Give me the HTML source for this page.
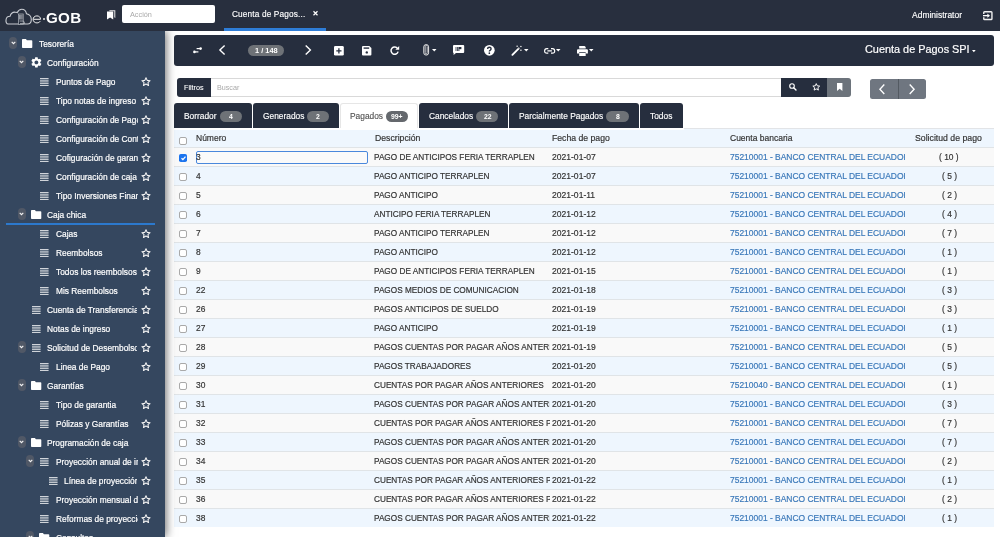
<!DOCTYPE html>
<html><head><meta charset="utf-8"><style>
*{box-sizing:border-box;margin:0;padding:0}
html,body{width:1000px;height:537px;overflow:hidden;background:#fff;-webkit-font-smoothing:antialiased;font-family:"Liberation Sans",sans-serif;color:#333}
.a{position:absolute}
.t{position:absolute;white-space:nowrap;will-change:transform}
svg{position:absolute;overflow:visible}
</style></head><body>
<div class="a" style="left:0;top:0;width:1000px;height:31px;z-index:5;background:#282f3e">
<svg style="left:0px;top:0px" width="50" height="30" viewBox="0 0 50 30"><path d="M8.1 24 C6.5 24 5.8 22 6 20 C6.2 17.5 8 16.2 10.1 16.2 C10.8 13.5 12.5 12 15 12.1 C16 12.1 16.8 12.3 17.3 12.6 C18.3 10.4 20 9.3 21.8 9.3 C24.2 9.3 26 11.2 26.5 13.8 C29.5 14.5 31.3 16.5 31.3 19.5 C31.3 22 29.8 24 27.5 24 Z" fill="none" stroke="#c9ccd2" stroke-width="1.1"/><rect x="18.4" y="14" width="4.8" height="10.6" fill="#282f3e" stroke="#b5b9bf" stroke-width="0.7"/><path d="M19.6 14.8 V19.5 M20.8 14.8 V19.5 M22 14.8 V19.5" stroke="#c0c3c8" stroke-width="0.8"/><path d="M19.5 21 H23.5 L24.8 23.5 H20" fill="none" stroke="#b5b9bf" stroke-width="0.8"/></svg>
<svg style="left:0px;top:0px" width="50" height="30" viewBox="0 0 50 30"><path d="M33.3 19.3 H40.5 C40.6 17.2 39 15.9 36.9 15.9 C34.6 15.9 33.1 17.5 33.1 19.4 C33.1 21.4 34.7 22.9 36.9 22.9 C38.3 22.9 39.5 22.3 40.2 21.3" fill="none" stroke="#f2f2f2" stroke-width="1"/></svg>
<div class="a" style="left:43.2px;top:18.3px;width:1.7px;height:1.7px;background:#e8e8e8;border-radius:1px"></div>
<div class="t" style="left:46.20px;top:4.52px;font-size:13.8px;line-height:28px;color:#fff;font-weight:bold;"><span style="display:inline-block;transform-origin:0 0;transform:scaleX(1.1);letter-spacing:0.25px">GOB</span></div>
<svg style="left:106.9px;top:9.5px" width="8.5" height="9.5" viewBox="0 0 8.5 9.5"><path d="M2.4 0.3 H8.3 V8 L7.3 7.2 V1.3 H2.4 Z" fill="#e8e8e8"/><path d="M0 1.6 H6.2 V9.4 L3.1 7.6 L0 9.4 Z" fill="#fff"/></svg>
<div class="a" style="left:122.1px;top:4.7px;width:92.9px;height:18.3px;background:#fff;border-radius:2px"></div>
<div class="t" style="left:129.80px;top:6.87px;font-size:7.6px;line-height:15px;color:#a9a9a9;font-weight:normal;"><span style="display:inline-block;transform-origin:0 0;transform:scaleX(0.96);letter-spacing:0px">Acción</span></div>
<div class="t" style="left:232.30px;top:4.95px;font-size:8.8px;line-height:18px;color:#fff;font-weight:normal;-webkit-text-stroke:0.15px #fff;"><span style="display:inline-block;transform-origin:0 0;transform:scaleX(0.94);letter-spacing:0.15px">Cuenta de Pagos...</span></div>
<svg style="left:313px;top:11px" width="5" height="4.5" viewBox="0 0 5 4.5"><path d="M0.5 0.3 L4.5 4.2 M4.5 0.3 L0.5 4.2" stroke="#fff" stroke-width="1.2"/></svg>
<div class="a" style="left:224px;top:28px;width:102px;height:3px;background:#2e7dd7;"></div>
<div class="t" style="left:912.40px;top:6.35px;font-size:8.8px;line-height:18px;color:#fff;font-weight:normal;-webkit-text-stroke:0.15px #fff;"><span style="display:inline-block;transform-origin:0 0;transform:scaleX(0.965);letter-spacing:0px">Administrator</span></div>
<svg style="left:983px;top:11.4px" width="9.7" height="9.3" viewBox="0 0 9.7 9.3"><path d="M0.75 3.1 V1.6 Q0.75 0.75 1.6 0.75 H8.1 Q8.95 0.75 8.95 1.6 V7.7 Q8.95 8.55 8.1 8.55 H1.6 Q0.75 8.55 0.75 7.7 V6.2" fill="none" stroke="#f0f0f0" stroke-width="1.4"/><path d="M0 4.65 H5" stroke="#fff" stroke-width="1.3"/><path d="M4.4 2.6 L7 4.65 L4.4 6.7 Z" fill="#fff"/></svg>
</div>
<div class="a" style="left:0;top:31px;width:165px;height:506px;background:#35475f;box-shadow:1px 0 9px rgba(0,0,0,.6);z-index:3;overflow:hidden">
<div class="a" style="left:9.2px;top:6.3px;width:8px;height:12px;border-radius:4px;background:#505866"><svg style="left:1.5px;top:4.0px" width="5" height="4" viewBox="0 0 5 4"><path d="M0.7 0.8 L2.5 2.6 L4.3 0.8" fill="none" stroke="#f4f4f4" stroke-width="1.15"/></svg></div>
<svg style="left:22.0px;top:7.6px" width="10.3" height="9" viewBox="0 0 10.3 9"><path d="M0 0.8 Q0 0 0.8 0 H3.9 L4.9 1.2 H9.5 Q10.3 1.2 10.3 2 V8.2 Q10.3 9 9.5 9 H0.8 Q0 9 0 8.2 Z" fill="#fff"/></svg>
<div class="t" style="left:38.70px;top:4.01px;font-size:9.2px;line-height:18px;color:#fff;font-weight:normal;width:98.50px;overflow:hidden;-webkit-text-stroke:0.2px #fff;"><span style="display:inline-block;transform-origin:0 0;transform:scaleX(0.91);letter-spacing:0px">Tesorería</span></div>
<div class="a" style="left:17.7px;top:25.3px;width:8px;height:12px;border-radius:4px;background:#505866"><svg style="left:1.5px;top:4.0px" width="5" height="4" viewBox="0 0 5 4"><path d="M0.7 0.8 L2.5 2.6 L4.3 0.8" fill="none" stroke="#f4f4f4" stroke-width="1.15"/></svg></div>
<svg style="left:29.9px;top:24.7px" width="12.8" height="12.8" viewBox="0 0 24 24"><path fill="#fff" d="M19.14 12.94c.04-.3.06-.61.06-.94 0-.32-.02-.64-.07-.94l2.03-1.58a.49.49 0 0 0 .12-.61l-1.920-3.320a.488.488 0 0 0-.59-.22l-2.39.96c-.5-.38-1.030-.7-1.620-.94l-.36-2.54a.484.484 0 0 0-.48-.41h-3.84c-.24 0-.43.17-.47.41l-.36 2.54c-.59.24-1.130.57-1.620.94l-2.390-.96c-.22-.08-.47 0-.59.22L2.74 8.87c-.12.21-.08.47.12.61l2.03 1.58c-.05.3-.09.63-.09.94s.02.64.07.94l-2.03 1.58a.49.49 0 0 0-.12.61l1.92 3.32c.12.22.37.29.59.22l2.39-.96c.5.38 1.03.7 1.62.94l.36 2.54c.05.24.24.41.48.41h3.84c.24 0 .44-.17.47-.41l.36-2.54c.59-.24 1.13-.56 1.62-.94l2.39.96c.22.08.47 0 .59-.22l1.92-3.32c.12-.22.07-.47-.12-.61l-2.01-1.58zM12 15.6c-1.98 0-3.6-1.62-3.6-3.6s1.62-3.6 3.6-3.6 3.6 1.62 3.6 3.6-1.62 3.6-3.6 3.6z"/></svg>
<div class="t" style="left:47.20px;top:23.01px;font-size:9.2px;line-height:18px;color:#fff;font-weight:normal;width:90.00px;overflow:hidden;-webkit-text-stroke:0.2px #fff;"><span style="display:inline-block;transform-origin:0 0;transform:scaleX(0.91);letter-spacing:0px">Configuración</span></div>
<svg style="left:40.0px;top:46.9px" width="8.6" height="7.8" viewBox="0 0 8.6 7.8"><g fill="#eceef0"><rect y="0" width="8.6" height="0.85"/><rect y="1.75" width="8.6" height="0.85"/><rect y="3.5" width="8.6" height="0.85"/><rect y="5.25" width="8.6" height="0.85"/><rect y="7" width="8.6" height="0.85"/></g></svg>
<div class="t" style="left:55.70px;top:42.01px;font-size:9.2px;line-height:18px;color:#fff;font-weight:normal;width:81.50px;overflow:hidden;-webkit-text-stroke:0.2px #fff;"><span style="display:inline-block;transform-origin:0 0;transform:scaleX(0.91);letter-spacing:0px">Puntos de Pago</span></div>
<svg style="left:141px;top:45.7px" width="10" height="9.6" viewBox="0 0 24 23"><path d="M12 1.8 L14.9 8.1 L21.8 8.9 L16.7 13.6 L18.1 20.4 L12 17 L5.9 20.4 L7.3 13.6 L2.2 8.9 L9.1 8.1 Z" fill="none" stroke="#f2f2f2" stroke-width="2.6" stroke-linejoin="round"/></svg>
<svg style="left:40.0px;top:65.9px" width="8.6" height="7.8" viewBox="0 0 8.6 7.8"><g fill="#eceef0"><rect y="0" width="8.6" height="0.85"/><rect y="1.75" width="8.6" height="0.85"/><rect y="3.5" width="8.6" height="0.85"/><rect y="5.25" width="8.6" height="0.85"/><rect y="7" width="8.6" height="0.85"/></g></svg>
<div class="t" style="left:55.70px;top:61.01px;font-size:9.2px;line-height:18px;color:#fff;font-weight:normal;width:81.50px;overflow:hidden;-webkit-text-stroke:0.2px #fff;"><span style="display:inline-block;transform-origin:0 0;transform:scaleX(0.91);letter-spacing:0px">Tipo notas de ingreso</span></div>
<svg style="left:141px;top:64.7px" width="10" height="9.6" viewBox="0 0 24 23"><path d="M12 1.8 L14.9 8.1 L21.8 8.9 L16.7 13.6 L18.1 20.4 L12 17 L5.9 20.4 L7.3 13.6 L2.2 8.9 L9.1 8.1 Z" fill="none" stroke="#f2f2f2" stroke-width="2.6" stroke-linejoin="round"/></svg>
<svg style="left:40.0px;top:84.9px" width="8.6" height="7.8" viewBox="0 0 8.6 7.8"><g fill="#eceef0"><rect y="0" width="8.6" height="0.85"/><rect y="1.75" width="8.6" height="0.85"/><rect y="3.5" width="8.6" height="0.85"/><rect y="5.25" width="8.6" height="0.85"/><rect y="7" width="8.6" height="0.85"/></g></svg>
<div class="t" style="left:55.70px;top:80.01px;font-size:9.2px;line-height:18px;color:#fff;font-weight:normal;width:81.50px;overflow:hidden;-webkit-text-stroke:0.2px #fff;"><span style="display:inline-block;transform-origin:0 0;transform:scaleX(0.91);letter-spacing:0px">Configuración de Pagos</span></div>
<svg style="left:141px;top:83.7px" width="10" height="9.6" viewBox="0 0 24 23"><path d="M12 1.8 L14.9 8.1 L21.8 8.9 L16.7 13.6 L18.1 20.4 L12 17 L5.9 20.4 L7.3 13.6 L2.2 8.9 L9.1 8.1 Z" fill="none" stroke="#f2f2f2" stroke-width="2.6" stroke-linejoin="round"/></svg>
<svg style="left:40.0px;top:103.9px" width="8.6" height="7.8" viewBox="0 0 8.6 7.8"><g fill="#eceef0"><rect y="0" width="8.6" height="0.85"/><rect y="1.75" width="8.6" height="0.85"/><rect y="3.5" width="8.6" height="0.85"/><rect y="5.25" width="8.6" height="0.85"/><rect y="7" width="8.6" height="0.85"/></g></svg>
<div class="t" style="left:55.70px;top:99.01px;font-size:9.2px;line-height:18px;color:#fff;font-weight:normal;width:81.50px;overflow:hidden;-webkit-text-stroke:0.2px #fff;"><span style="display:inline-block;transform-origin:0 0;transform:scaleX(0.91);letter-spacing:0px">Configuración de Contabilidad</span></div>
<svg style="left:141px;top:102.7px" width="10" height="9.6" viewBox="0 0 24 23"><path d="M12 1.8 L14.9 8.1 L21.8 8.9 L16.7 13.6 L18.1 20.4 L12 17 L5.9 20.4 L7.3 13.6 L2.2 8.9 L9.1 8.1 Z" fill="none" stroke="#f2f2f2" stroke-width="2.6" stroke-linejoin="round"/></svg>
<svg style="left:40.0px;top:122.9px" width="8.6" height="7.8" viewBox="0 0 8.6 7.8"><g fill="#eceef0"><rect y="0" width="8.6" height="0.85"/><rect y="1.75" width="8.6" height="0.85"/><rect y="3.5" width="8.6" height="0.85"/><rect y="5.25" width="8.6" height="0.85"/><rect y="7" width="8.6" height="0.85"/></g></svg>
<div class="t" style="left:55.70px;top:118.01px;font-size:9.2px;line-height:18px;color:#fff;font-weight:normal;width:81.50px;overflow:hidden;-webkit-text-stroke:0.2px #fff;"><span style="display:inline-block;transform-origin:0 0;transform:scaleX(0.91);letter-spacing:0px">Cofiguración de garantias</span></div>
<svg style="left:141px;top:121.7px" width="10" height="9.6" viewBox="0 0 24 23"><path d="M12 1.8 L14.9 8.1 L21.8 8.9 L16.7 13.6 L18.1 20.4 L12 17 L5.9 20.4 L7.3 13.6 L2.2 8.9 L9.1 8.1 Z" fill="none" stroke="#f2f2f2" stroke-width="2.6" stroke-linejoin="round"/></svg>
<svg style="left:40.0px;top:141.9px" width="8.6" height="7.8" viewBox="0 0 8.6 7.8"><g fill="#eceef0"><rect y="0" width="8.6" height="0.85"/><rect y="1.75" width="8.6" height="0.85"/><rect y="3.5" width="8.6" height="0.85"/><rect y="5.25" width="8.6" height="0.85"/><rect y="7" width="8.6" height="0.85"/></g></svg>
<div class="t" style="left:55.70px;top:137.01px;font-size:9.2px;line-height:18px;color:#fff;font-weight:normal;width:81.50px;overflow:hidden;-webkit-text-stroke:0.2px #fff;"><span style="display:inline-block;transform-origin:0 0;transform:scaleX(0.91);letter-spacing:0px">Configuración de caja chica</span></div>
<svg style="left:141px;top:140.7px" width="10" height="9.6" viewBox="0 0 24 23"><path d="M12 1.8 L14.9 8.1 L21.8 8.9 L16.7 13.6 L18.1 20.4 L12 17 L5.9 20.4 L7.3 13.6 L2.2 8.9 L9.1 8.1 Z" fill="none" stroke="#f2f2f2" stroke-width="2.6" stroke-linejoin="round"/></svg>
<svg style="left:40.0px;top:160.9px" width="8.6" height="7.8" viewBox="0 0 8.6 7.8"><g fill="#eceef0"><rect y="0" width="8.6" height="0.85"/><rect y="1.75" width="8.6" height="0.85"/><rect y="3.5" width="8.6" height="0.85"/><rect y="5.25" width="8.6" height="0.85"/><rect y="7" width="8.6" height="0.85"/></g></svg>
<div class="t" style="left:55.70px;top:156.01px;font-size:9.2px;line-height:18px;color:#fff;font-weight:normal;width:81.50px;overflow:hidden;-webkit-text-stroke:0.2px #fff;"><span style="display:inline-block;transform-origin:0 0;transform:scaleX(0.91);letter-spacing:0px">Tipo Inversiones Financieras</span></div>
<svg style="left:141px;top:159.7px" width="10" height="9.6" viewBox="0 0 24 23"><path d="M12 1.8 L14.9 8.1 L21.8 8.9 L16.7 13.6 L18.1 20.4 L12 17 L5.9 20.4 L7.3 13.6 L2.2 8.9 L9.1 8.1 Z" fill="none" stroke="#f2f2f2" stroke-width="2.6" stroke-linejoin="round"/></svg>
<div class="a" style="left:17.7px;top:177.3px;width:8px;height:12px;border-radius:4px;background:#505866"><svg style="left:1.5px;top:4.0px" width="5" height="4" viewBox="0 0 5 4"><path d="M0.7 0.8 L2.5 2.6 L4.3 0.8" fill="none" stroke="#f4f4f4" stroke-width="1.15"/></svg></div>
<svg style="left:30.5px;top:178.6px" width="10.3" height="9" viewBox="0 0 10.3 9"><path d="M0 0.8 Q0 0 0.8 0 H3.9 L4.9 1.2 H9.5 Q10.3 1.2 10.3 2 V8.2 Q10.3 9 9.5 9 H0.8 Q0 9 0 8.2 Z" fill="#fff"/></svg>
<div class="t" style="left:47.20px;top:175.01px;font-size:9.2px;line-height:18px;color:#fff;font-weight:normal;width:90.00px;overflow:hidden;-webkit-text-stroke:0.2px #fff;"><span style="display:inline-block;transform-origin:0 0;transform:scaleX(0.91);letter-spacing:0px">Caja chica</span></div>
<svg style="left:40.0px;top:198.9px" width="8.6" height="7.8" viewBox="0 0 8.6 7.8"><g fill="#eceef0"><rect y="0" width="8.6" height="0.85"/><rect y="1.75" width="8.6" height="0.85"/><rect y="3.5" width="8.6" height="0.85"/><rect y="5.25" width="8.6" height="0.85"/><rect y="7" width="8.6" height="0.85"/></g></svg>
<div class="t" style="left:55.70px;top:194.01px;font-size:9.2px;line-height:18px;color:#fff;font-weight:normal;width:81.50px;overflow:hidden;-webkit-text-stroke:0.2px #fff;"><span style="display:inline-block;transform-origin:0 0;transform:scaleX(0.91);letter-spacing:0px">Cajas</span></div>
<svg style="left:141px;top:197.7px" width="10" height="9.6" viewBox="0 0 24 23"><path d="M12 1.8 L14.9 8.1 L21.8 8.9 L16.7 13.6 L18.1 20.4 L12 17 L5.9 20.4 L7.3 13.6 L2.2 8.9 L9.1 8.1 Z" fill="none" stroke="#f2f2f2" stroke-width="2.6" stroke-linejoin="round"/></svg>
<svg style="left:40.0px;top:217.9px" width="8.6" height="7.8" viewBox="0 0 8.6 7.8"><g fill="#eceef0"><rect y="0" width="8.6" height="0.85"/><rect y="1.75" width="8.6" height="0.85"/><rect y="3.5" width="8.6" height="0.85"/><rect y="5.25" width="8.6" height="0.85"/><rect y="7" width="8.6" height="0.85"/></g></svg>
<div class="t" style="left:55.70px;top:213.01px;font-size:9.2px;line-height:18px;color:#fff;font-weight:normal;width:81.50px;overflow:hidden;-webkit-text-stroke:0.2px #fff;"><span style="display:inline-block;transform-origin:0 0;transform:scaleX(0.91);letter-spacing:0px">Reembolsos</span></div>
<svg style="left:141px;top:216.7px" width="10" height="9.6" viewBox="0 0 24 23"><path d="M12 1.8 L14.9 8.1 L21.8 8.9 L16.7 13.6 L18.1 20.4 L12 17 L5.9 20.4 L7.3 13.6 L2.2 8.9 L9.1 8.1 Z" fill="none" stroke="#f2f2f2" stroke-width="2.6" stroke-linejoin="round"/></svg>
<svg style="left:40.0px;top:236.9px" width="8.6" height="7.8" viewBox="0 0 8.6 7.8"><g fill="#eceef0"><rect y="0" width="8.6" height="0.85"/><rect y="1.75" width="8.6" height="0.85"/><rect y="3.5" width="8.6" height="0.85"/><rect y="5.25" width="8.6" height="0.85"/><rect y="7" width="8.6" height="0.85"/></g></svg>
<div class="t" style="left:55.70px;top:232.01px;font-size:9.2px;line-height:18px;color:#fff;font-weight:normal;width:81.50px;overflow:hidden;-webkit-text-stroke:0.2px #fff;"><span style="display:inline-block;transform-origin:0 0;transform:scaleX(0.91);letter-spacing:0px">Todos los reembolsos</span></div>
<svg style="left:141px;top:235.7px" width="10" height="9.6" viewBox="0 0 24 23"><path d="M12 1.8 L14.9 8.1 L21.8 8.9 L16.7 13.6 L18.1 20.4 L12 17 L5.9 20.4 L7.3 13.6 L2.2 8.9 L9.1 8.1 Z" fill="none" stroke="#f2f2f2" stroke-width="2.6" stroke-linejoin="round"/></svg>
<svg style="left:40.0px;top:255.9px" width="8.6" height="7.8" viewBox="0 0 8.6 7.8"><g fill="#eceef0"><rect y="0" width="8.6" height="0.85"/><rect y="1.75" width="8.6" height="0.85"/><rect y="3.5" width="8.6" height="0.85"/><rect y="5.25" width="8.6" height="0.85"/><rect y="7" width="8.6" height="0.85"/></g></svg>
<div class="t" style="left:55.70px;top:251.01px;font-size:9.2px;line-height:18px;color:#fff;font-weight:normal;width:81.50px;overflow:hidden;-webkit-text-stroke:0.2px #fff;"><span style="display:inline-block;transform-origin:0 0;transform:scaleX(0.91);letter-spacing:0px">Mis Reembolsos</span></div>
<svg style="left:141px;top:254.7px" width="10" height="9.6" viewBox="0 0 24 23"><path d="M12 1.8 L14.9 8.1 L21.8 8.9 L16.7 13.6 L18.1 20.4 L12 17 L5.9 20.4 L7.3 13.6 L2.2 8.9 L9.1 8.1 Z" fill="none" stroke="#f2f2f2" stroke-width="2.6" stroke-linejoin="round"/></svg>
<svg style="left:31.5px;top:274.9px" width="8.6" height="7.8" viewBox="0 0 8.6 7.8"><g fill="#eceef0"><rect y="0" width="8.6" height="0.85"/><rect y="1.75" width="8.6" height="0.85"/><rect y="3.5" width="8.6" height="0.85"/><rect y="5.25" width="8.6" height="0.85"/><rect y="7" width="8.6" height="0.85"/></g></svg>
<div class="t" style="left:47.20px;top:270.01px;font-size:9.2px;line-height:18px;color:#fff;font-weight:normal;width:90.00px;overflow:hidden;-webkit-text-stroke:0.2px #fff;"><span style="display:inline-block;transform-origin:0 0;transform:scaleX(0.91);letter-spacing:0px">Cuenta de Transferencias</span></div>
<svg style="left:141px;top:273.7px" width="10" height="9.6" viewBox="0 0 24 23"><path d="M12 1.8 L14.9 8.1 L21.8 8.9 L16.7 13.6 L18.1 20.4 L12 17 L5.9 20.4 L7.3 13.6 L2.2 8.9 L9.1 8.1 Z" fill="none" stroke="#f2f2f2" stroke-width="2.6" stroke-linejoin="round"/></svg>
<svg style="left:31.5px;top:293.9px" width="8.6" height="7.8" viewBox="0 0 8.6 7.8"><g fill="#eceef0"><rect y="0" width="8.6" height="0.85"/><rect y="1.75" width="8.6" height="0.85"/><rect y="3.5" width="8.6" height="0.85"/><rect y="5.25" width="8.6" height="0.85"/><rect y="7" width="8.6" height="0.85"/></g></svg>
<div class="t" style="left:47.20px;top:289.01px;font-size:9.2px;line-height:18px;color:#fff;font-weight:normal;width:90.00px;overflow:hidden;-webkit-text-stroke:0.2px #fff;"><span style="display:inline-block;transform-origin:0 0;transform:scaleX(0.91);letter-spacing:0px">Notas de ingreso</span></div>
<svg style="left:141px;top:292.7px" width="10" height="9.6" viewBox="0 0 24 23"><path d="M12 1.8 L14.9 8.1 L21.8 8.9 L16.7 13.6 L18.1 20.4 L12 17 L5.9 20.4 L7.3 13.6 L2.2 8.9 L9.1 8.1 Z" fill="none" stroke="#f2f2f2" stroke-width="2.6" stroke-linejoin="round"/></svg>
<div class="a" style="left:17.7px;top:310.3px;width:8px;height:12px;border-radius:4px;background:#505866"><svg style="left:1.5px;top:4.0px" width="5" height="4" viewBox="0 0 5 4"><path d="M0.7 0.8 L2.5 2.6 L4.3 0.8" fill="none" stroke="#f4f4f4" stroke-width="1.15"/></svg></div>
<svg style="left:31.5px;top:312.9px" width="8.6" height="7.8" viewBox="0 0 8.6 7.8"><g fill="#eceef0"><rect y="0" width="8.6" height="0.85"/><rect y="1.75" width="8.6" height="0.85"/><rect y="3.5" width="8.6" height="0.85"/><rect y="5.25" width="8.6" height="0.85"/><rect y="7" width="8.6" height="0.85"/></g></svg>
<div class="t" style="left:47.20px;top:308.01px;font-size:9.2px;line-height:18px;color:#fff;font-weight:normal;width:90.00px;overflow:hidden;-webkit-text-stroke:0.2px #fff;"><span style="display:inline-block;transform-origin:0 0;transform:scaleX(0.91);letter-spacing:0px">Solicitud de Desembolso</span></div>
<svg style="left:141px;top:311.7px" width="10" height="9.6" viewBox="0 0 24 23"><path d="M12 1.8 L14.9 8.1 L21.8 8.9 L16.7 13.6 L18.1 20.4 L12 17 L5.9 20.4 L7.3 13.6 L2.2 8.9 L9.1 8.1 Z" fill="none" stroke="#f2f2f2" stroke-width="2.6" stroke-linejoin="round"/></svg>
<svg style="left:40.0px;top:331.9px" width="8.6" height="7.8" viewBox="0 0 8.6 7.8"><g fill="#eceef0"><rect y="0" width="8.6" height="0.85"/><rect y="1.75" width="8.6" height="0.85"/><rect y="3.5" width="8.6" height="0.85"/><rect y="5.25" width="8.6" height="0.85"/><rect y="7" width="8.6" height="0.85"/></g></svg>
<div class="t" style="left:55.70px;top:327.01px;font-size:9.2px;line-height:18px;color:#fff;font-weight:normal;width:81.50px;overflow:hidden;-webkit-text-stroke:0.2px #fff;"><span style="display:inline-block;transform-origin:0 0;transform:scaleX(0.91);letter-spacing:0px">Linea de Pago</span></div>
<svg style="left:141px;top:330.7px" width="10" height="9.6" viewBox="0 0 24 23"><path d="M12 1.8 L14.9 8.1 L21.8 8.9 L16.7 13.6 L18.1 20.4 L12 17 L5.9 20.4 L7.3 13.6 L2.2 8.9 L9.1 8.1 Z" fill="none" stroke="#f2f2f2" stroke-width="2.6" stroke-linejoin="round"/></svg>
<div class="a" style="left:17.7px;top:348.3px;width:8px;height:12px;border-radius:4px;background:#505866"><svg style="left:1.5px;top:4.0px" width="5" height="4" viewBox="0 0 5 4"><path d="M0.7 0.8 L2.5 2.6 L4.3 0.8" fill="none" stroke="#f4f4f4" stroke-width="1.15"/></svg></div>
<svg style="left:30.5px;top:349.6px" width="10.3" height="9" viewBox="0 0 10.3 9"><path d="M0 0.8 Q0 0 0.8 0 H3.9 L4.9 1.2 H9.5 Q10.3 1.2 10.3 2 V8.2 Q10.3 9 9.5 9 H0.8 Q0 9 0 8.2 Z" fill="#fff"/></svg>
<div class="t" style="left:47.20px;top:346.01px;font-size:9.2px;line-height:18px;color:#fff;font-weight:normal;width:90.00px;overflow:hidden;-webkit-text-stroke:0.2px #fff;"><span style="display:inline-block;transform-origin:0 0;transform:scaleX(0.91);letter-spacing:0px">Garantías</span></div>
<svg style="left:40.0px;top:369.9px" width="8.6" height="7.8" viewBox="0 0 8.6 7.8"><g fill="#eceef0"><rect y="0" width="8.6" height="0.85"/><rect y="1.75" width="8.6" height="0.85"/><rect y="3.5" width="8.6" height="0.85"/><rect y="5.25" width="8.6" height="0.85"/><rect y="7" width="8.6" height="0.85"/></g></svg>
<div class="t" style="left:55.70px;top:365.01px;font-size:9.2px;line-height:18px;color:#fff;font-weight:normal;width:81.50px;overflow:hidden;-webkit-text-stroke:0.2px #fff;"><span style="display:inline-block;transform-origin:0 0;transform:scaleX(0.91);letter-spacing:0px">Tipo de garantia</span></div>
<svg style="left:141px;top:368.7px" width="10" height="9.6" viewBox="0 0 24 23"><path d="M12 1.8 L14.9 8.1 L21.8 8.9 L16.7 13.6 L18.1 20.4 L12 17 L5.9 20.4 L7.3 13.6 L2.2 8.9 L9.1 8.1 Z" fill="none" stroke="#f2f2f2" stroke-width="2.6" stroke-linejoin="round"/></svg>
<svg style="left:40.0px;top:388.9px" width="8.6" height="7.8" viewBox="0 0 8.6 7.8"><g fill="#eceef0"><rect y="0" width="8.6" height="0.85"/><rect y="1.75" width="8.6" height="0.85"/><rect y="3.5" width="8.6" height="0.85"/><rect y="5.25" width="8.6" height="0.85"/><rect y="7" width="8.6" height="0.85"/></g></svg>
<div class="t" style="left:55.70px;top:384.01px;font-size:9.2px;line-height:18px;color:#fff;font-weight:normal;width:81.50px;overflow:hidden;-webkit-text-stroke:0.2px #fff;"><span style="display:inline-block;transform-origin:0 0;transform:scaleX(0.91);letter-spacing:0px">Pólizas y Garantías</span></div>
<svg style="left:141px;top:387.7px" width="10" height="9.6" viewBox="0 0 24 23"><path d="M12 1.8 L14.9 8.1 L21.8 8.9 L16.7 13.6 L18.1 20.4 L12 17 L5.9 20.4 L7.3 13.6 L2.2 8.9 L9.1 8.1 Z" fill="none" stroke="#f2f2f2" stroke-width="2.6" stroke-linejoin="round"/></svg>
<div class="a" style="left:17.7px;top:405.3px;width:8px;height:12px;border-radius:4px;background:#505866"><svg style="left:1.5px;top:4.0px" width="5" height="4" viewBox="0 0 5 4"><path d="M0.7 0.8 L2.5 2.6 L4.3 0.8" fill="none" stroke="#f4f4f4" stroke-width="1.15"/></svg></div>
<svg style="left:30.5px;top:406.6px" width="10.3" height="9" viewBox="0 0 10.3 9"><path d="M0 0.8 Q0 0 0.8 0 H3.9 L4.9 1.2 H9.5 Q10.3 1.2 10.3 2 V8.2 Q10.3 9 9.5 9 H0.8 Q0 9 0 8.2 Z" fill="#fff"/></svg>
<div class="t" style="left:47.20px;top:403.01px;font-size:9.2px;line-height:18px;color:#fff;font-weight:normal;width:90.00px;overflow:hidden;-webkit-text-stroke:0.2px #fff;"><span style="display:inline-block;transform-origin:0 0;transform:scaleX(0.91);letter-spacing:0px">Programación de caja</span></div>
<div class="a" style="left:26.2px;top:424.3px;width:8px;height:12px;border-radius:4px;background:#505866"><svg style="left:1.5px;top:4.0px" width="5" height="4" viewBox="0 0 5 4"><path d="M0.7 0.8 L2.5 2.6 L4.3 0.8" fill="none" stroke="#f4f4f4" stroke-width="1.15"/></svg></div>
<svg style="left:40.0px;top:426.9px" width="8.6" height="7.8" viewBox="0 0 8.6 7.8"><g fill="#eceef0"><rect y="0" width="8.6" height="0.85"/><rect y="1.75" width="8.6" height="0.85"/><rect y="3.5" width="8.6" height="0.85"/><rect y="5.25" width="8.6" height="0.85"/><rect y="7" width="8.6" height="0.85"/></g></svg>
<div class="t" style="left:55.70px;top:422.01px;font-size:9.2px;line-height:18px;color:#fff;font-weight:normal;width:81.50px;overflow:hidden;-webkit-text-stroke:0.2px #fff;"><span style="display:inline-block;transform-origin:0 0;transform:scaleX(0.91);letter-spacing:0px">Proyección anual de ingresos</span></div>
<svg style="left:141px;top:425.7px" width="10" height="9.6" viewBox="0 0 24 23"><path d="M12 1.8 L14.9 8.1 L21.8 8.9 L16.7 13.6 L18.1 20.4 L12 17 L5.9 20.4 L7.3 13.6 L2.2 8.9 L9.1 8.1 Z" fill="none" stroke="#f2f2f2" stroke-width="2.6" stroke-linejoin="round"/></svg>
<svg style="left:48.5px;top:445.9px" width="8.6" height="7.8" viewBox="0 0 8.6 7.8"><g fill="#eceef0"><rect y="0" width="8.6" height="0.85"/><rect y="1.75" width="8.6" height="0.85"/><rect y="3.5" width="8.6" height="0.85"/><rect y="5.25" width="8.6" height="0.85"/><rect y="7" width="8.6" height="0.85"/></g></svg>
<div class="t" style="left:64.20px;top:441.01px;font-size:9.2px;line-height:18px;color:#fff;font-weight:normal;width:73.00px;overflow:hidden;-webkit-text-stroke:0.2px #fff;"><span style="display:inline-block;transform-origin:0 0;transform:scaleX(0.91);letter-spacing:0px">Línea de proyección</span></div>
<svg style="left:141px;top:444.7px" width="10" height="9.6" viewBox="0 0 24 23"><path d="M12 1.8 L14.9 8.1 L21.8 8.9 L16.7 13.6 L18.1 20.4 L12 17 L5.9 20.4 L7.3 13.6 L2.2 8.9 L9.1 8.1 Z" fill="none" stroke="#f2f2f2" stroke-width="2.6" stroke-linejoin="round"/></svg>
<svg style="left:40.0px;top:464.9px" width="8.6" height="7.8" viewBox="0 0 8.6 7.8"><g fill="#eceef0"><rect y="0" width="8.6" height="0.85"/><rect y="1.75" width="8.6" height="0.85"/><rect y="3.5" width="8.6" height="0.85"/><rect y="5.25" width="8.6" height="0.85"/><rect y="7" width="8.6" height="0.85"/></g></svg>
<div class="t" style="left:55.70px;top:460.01px;font-size:9.2px;line-height:18px;color:#fff;font-weight:normal;width:81.50px;overflow:hidden;-webkit-text-stroke:0.2px #fff;"><span style="display:inline-block;transform-origin:0 0;transform:scaleX(0.91);letter-spacing:0px">Proyección mensual de caja</span></div>
<svg style="left:141px;top:463.7px" width="10" height="9.6" viewBox="0 0 24 23"><path d="M12 1.8 L14.9 8.1 L21.8 8.9 L16.7 13.6 L18.1 20.4 L12 17 L5.9 20.4 L7.3 13.6 L2.2 8.9 L9.1 8.1 Z" fill="none" stroke="#f2f2f2" stroke-width="2.6" stroke-linejoin="round"/></svg>
<svg style="left:40.0px;top:483.9px" width="8.6" height="7.8" viewBox="0 0 8.6 7.8"><g fill="#eceef0"><rect y="0" width="8.6" height="0.85"/><rect y="1.75" width="8.6" height="0.85"/><rect y="3.5" width="8.6" height="0.85"/><rect y="5.25" width="8.6" height="0.85"/><rect y="7" width="8.6" height="0.85"/></g></svg>
<div class="t" style="left:55.70px;top:479.01px;font-size:9.2px;line-height:18px;color:#fff;font-weight:normal;width:81.50px;overflow:hidden;-webkit-text-stroke:0.2px #fff;"><span style="display:inline-block;transform-origin:0 0;transform:scaleX(0.91);letter-spacing:0px">Reformas de proyección</span></div>
<svg style="left:141px;top:482.7px" width="10" height="9.6" viewBox="0 0 24 23"><path d="M12 1.8 L14.9 8.1 L21.8 8.9 L16.7 13.6 L18.1 20.4 L12 17 L5.9 20.4 L7.3 13.6 L2.2 8.9 L9.1 8.1 Z" fill="none" stroke="#f2f2f2" stroke-width="2.6" stroke-linejoin="round"/></svg>
<div class="a" style="left:26.2px;top:500.3px;width:8px;height:12px;border-radius:4px;background:#505866"><svg style="left:1.5px;top:4.0px" width="5" height="4" viewBox="0 0 5 4"><path d="M0.7 0.8 L2.5 2.6 L4.3 0.8" fill="none" stroke="#f4f4f4" stroke-width="1.15"/></svg></div>
<svg style="left:39.0px;top:501.6px" width="10.3" height="9" viewBox="0 0 10.3 9"><path d="M0 0.8 Q0 0 0.8 0 H3.9 L4.9 1.2 H9.5 Q10.3 1.2 10.3 2 V8.2 Q10.3 9 9.5 9 H0.8 Q0 9 0 8.2 Z" fill="#fff"/></svg>
<div class="t" style="left:55.70px;top:498.01px;font-size:9.2px;line-height:18px;color:#fff;font-weight:normal;width:81.50px;overflow:hidden;-webkit-text-stroke:0.2px #fff;"><span style="display:inline-block;transform-origin:0 0;transform:scaleX(0.91);letter-spacing:0px">Consultas</span></div>
<div class="a" style="left:6px;top:192.3px;width:149px;height:1.6px;background:#2c79cd;"></div>
</div>
<div class="a" style="left:174.2px;top:34.9px;width:819.8px;height:31.1px;background:#262e3e;border-radius:3px"></div>
<svg style="left:192.5px;top:47px" width="9" height="6.5" viewBox="0 0 9 6.5"><path d="M3.6 1.6 H7.6" stroke="#fff" stroke-width="1.2"/><circle cx="7.6" cy="1.6" r="1.3" fill="#fff"/><path d="M5.4 4.9 H1.4" stroke="#fff" stroke-width="1.2"/><circle cx="1.4" cy="4.9" r="1.3" fill="#fff"/></svg>
<svg style="left:219px;top:45.3px" width="6.3" height="10" viewBox="0 0 6.3 10"><path d="M5.6 0.5 L0.9 5 L5.6 9.5" fill="none" stroke="#fff" stroke-width="1.4"/></svg>
<div class="a" style="left:247.8px;top:44.8px;width:36.6px;height:11.2px;background:#6e7277;border-radius:5.6px"></div>
<div class="t" style="left:254.50px;top:43.14px;font-size:7.4px;line-height:15px;color:#fff;font-weight:bold;">1 / 148</div>
<svg style="left:304.8px;top:45.3px" width="6.3" height="10" viewBox="0 0 6.3 10"><path d="M0.7 0.5 L5.4 5 L0.7 9.5" fill="none" stroke="#fff" stroke-width="1.4"/></svg>
<svg style="left:334.2px;top:45.6px" width="9.8" height="9.6" viewBox="0 0 9.8 9.6"><rect width="9.8" height="9.6" rx="1.3" fill="#fff"/><path d="M4.9 2.2 V7.4 M2.3 4.8 H7.5" stroke="#262e3e" stroke-width="1.3"/></svg>
<svg style="left:361.8px;top:45.6px" width="9.4" height="9.4" viewBox="0 0 9.4 9.4"><path d="M0 1 Q0 0 1 0 H7.3 L9.4 2.1 V8.4 Q9.4 9.4 8.4 9.4 H1 Q0 9.4 0 8.4 Z" fill="#fff"/><rect x="1.6" y="1.4" width="5.6" height="1.4" fill="#262e3e"/><circle cx="4.8" cy="6.4" r="1.2" fill="#262e3e"/></svg>
<svg style="left:389.8px;top:46.2px" width="9.2" height="8.6" viewBox="0 0 9.2 8.6"><path d="M7.6 2.6 A3.6 3.6 0 1 0 8.1 5.6" fill="none" stroke="#fff" stroke-width="1.5"/><path d="M9.2 0 V3.8 H5.4 Z" fill="#fff"/></svg>
<svg style="left:422.6px;top:44.3px" width="6.4" height="11.7" viewBox="0 0 6.4 11.7"><path d="M4.2 3 V8.6 Q4.2 9.9 3.2 9.9 Q2.2 9.9 2.2 8.6 V2.6 Q2.2 1.5 3.2 1.5 Q4.3 1.5 4.3 2.6" fill="none" stroke="#e0e0e0" stroke-width="0.8"/><path d="M5.6 2.8 V8.9 Q5.6 11.1 3.2 11.1 Q0.8 11.1 0.8 8.9 V2.8 Q0.8 0.6 3.2 0.6 Q5.6 0.6 5.6 2.8 Z" fill="none" stroke="#e8e8e8" stroke-width="1"/></svg>
<svg style="left:431.8px;top:49px" width="4.5" height="3" viewBox="0 0 4.5 3"><path d="M0 0 H4.5 L2.25 2.6 Z" fill="#fff"/></svg>
<svg style="left:452.8px;top:45.2px" width="11.2" height="9.9" viewBox="0 0 11.2 9.9"><path d="M0 1 Q0 0 1 0 H10.2 Q11.2 0 11.2 1 V7 Q11.2 8 10.2 8 H3 L0.6 9.9 V8 Q0 8 0 7 Z" fill="#fff"/><g fill="#262e3e"><rect x="2.6" y="2" width="0.8" height="4"/><rect x="4" y="2" width="0.8" height="4"/><rect x="5.4" y="2" width="3" height="2.2"/><rect x="5.4" y="4.2" width="1" height="1.8"/></g></svg>
<svg style="left:484.3px;top:44.8px" width="10.7" height="10.7" viewBox="0 0 10.7 10.7"><circle cx="5.35" cy="5.35" r="5.35" fill="#fff"/><path d="M3.6 4.1 Q3.6 2.3 5.35 2.3 Q7.1 2.3 7.1 3.8 Q7.1 4.8 6.1 5.3 Q5.35 5.7 5.35 6.6" fill="none" stroke="#262e3e" stroke-width="1.4"/><circle cx="5.35" cy="8.2" r="0.85" fill="#262e3e"/></svg>
<svg style="left:511.2px;top:45.1px" width="11.4" height="11" viewBox="0 0 11.4 11"><path d="M1.4 9.8 L7.6 3.6" stroke="#fff" stroke-width="1.9" stroke-linecap="round"/><g fill="#e6e6e6"><rect x="5.5" y="0.6" width="1.3" height="1.3"/><rect x="9.2" y="0.9" width="1.4" height="1.2"/><rect x="9.2" y="4.6" width="1.4" height="1.3"/></g><rect x="7.3" y="2.6" width="1.2" height="1.2" fill="#aaa"/></svg>
<svg style="left:523.6px;top:49.4px" width="4.5" height="3" viewBox="0 0 4.5 3"><path d="M0 0 H4.5 L2.25 2.6 Z" fill="#fff"/></svg>
<svg style="left:544px;top:47.5px" width="11.3" height="5.8" viewBox="0 0 11.3 5.8"><path d="M4.3 0.6 H2.9 Q0.6 0.6 0.6 2.9 Q0.6 5.2 2.9 5.2 H4.3 M7 0.6 H8.4 Q10.7 0.6 10.7 2.9 Q10.7 5.2 8.4 5.2 H7 M3.4 2.9 H7.9" fill="none" stroke="#fff" stroke-width="1.2"/></svg>
<svg style="left:556px;top:49.4px" width="4.5" height="3" viewBox="0 0 4.5 3"><path d="M0 0 H4.5 L2.25 2.6 Z" fill="#fff"/></svg>
<svg style="left:576.7px;top:45.6px" width="10.9" height="10" viewBox="0 0 10.9 10"><path d="M2.2 0 H7.6 L8.7 1.1 V2.6 H2.2 Z" fill="#fff"/><path d="M0 4.3 Q0 3.3 1 3.3 H9.9 Q10.9 3.3 10.9 4.3 V7.6 H8.7 V6.3 H2.2 V7.6 H0 Z" fill="#fff"/><rect x="2.2" y="7" width="6.5" height="3" fill="#fff"/></svg>
<svg style="left:588.5px;top:49.4px" width="4.5" height="3" viewBox="0 0 4.5 3"><path d="M0 0 H4.5 L2.25 2.6 Z" fill="#fff"/></svg>
<div class="t" style="left:864.80px;top:38.35px;font-size:11.4px;line-height:23px;color:#fff;font-weight:normal;-webkit-text-stroke:0.2px #fff;"><span style="display:inline-block;transform-origin:0 0;transform:scaleX(0.955);letter-spacing:0px">Cuenta de Pagos SPI</span></div>
<svg style="left:971.6px;top:49.8px" width="3.7" height="2.2" viewBox="0 0 3.7 2.2"><path d="M0 0 H3.7 L1.85 2.2 Z" fill="#fff"/></svg>
<div class="a" style="left:177.2px;top:78.1px;width:673.8px;height:18.5px;background:#fff;border:1px solid #d9d9d9;border-radius:3px"></div>
<div class="a" style="left:177.2px;top:78.1px;width:33.6px;height:18.5px;background:#262e3e;border-radius:3px 0 0 3px"></div>
<div class="t" style="left:183.50px;top:79.90px;font-size:7.8px;line-height:16px;color:#fff;font-weight:normal;-webkit-text-stroke:0.1px #fff;"><span style="display:inline-block;transform-origin:0 0;transform:scaleX(0.92);letter-spacing:0px">Filtros</span></div>
<div class="t" style="left:217.20px;top:79.90px;font-size:7.8px;line-height:16px;color:#a9a9a9;font-weight:normal;"><span style="display:inline-block;transform-origin:0 0;transform:scaleX(0.92);letter-spacing:0px">Buscar</span></div>
<div class="a" style="left:781px;top:78.1px;width:46.4px;height:18.5px;background:#262e3e;"></div>
<div class="a" style="left:827.4px;top:78.1px;width:23.6px;height:18.5px;background:#6c737b;border-radius:0 3px 3px 0"></div>
<svg style="left:788.5px;top:83.3px" width="7.5" height="7.5" viewBox="0 0 7.5 7.5"><circle cx="3" cy="3" r="2.3" fill="none" stroke="#fff" stroke-width="1.1"/><path d="M4.7 4.7 L7 7" stroke="#fff" stroke-width="1.4" stroke-linecap="round"/></svg>
<svg style="left:811.5px;top:83px" width="8.5" height="8" viewBox="0 0 24 23"><path d="M12 1.8 L14.9 8.1 L21.8 8.9 L16.7 13.6 L18.1 20.4 L12 17 L5.9 20.4 L7.3 13.6 L2.2 8.9 L9.1 8.1 Z" fill="none" stroke="#fff" stroke-width="2.8" stroke-linejoin="round"/></svg>
<svg style="left:836.5px;top:83px" width="5.4" height="8" viewBox="0 0 5.4 8"><path d="M0 0 H5.4 V8 L2.7 5.8 L0 8 Z" fill="#fff"/></svg>
<div class="a" style="left:870.2px;top:78.6px;width:56px;height:20.6px;background:#6f7680;border-radius:2.5px"></div>
<div class="a" style="left:898px;top:78.6px;width:1.2px;height:20.6px;background:#535a62;"></div>
<svg style="left:878.6px;top:83.8px" width="6" height="10.5" viewBox="0 0 6 10.5"><path d="M5.3 0.5 L0.9 5.25 L5.3 10" fill="none" stroke="#fff" stroke-width="1.35"/></svg>
<svg style="left:908.8px;top:83.8px" width="6" height="10.5" viewBox="0 0 6 10.5"><path d="M0.7 0.5 L5.1 5.25 L0.7 10" fill="none" stroke="#fff" stroke-width="1.35"/></svg>
<div class="a" style="left:174px;top:102.7px;width:77.69999999999999px;height:25.5px;background:#262e3e;border-radius:3px 3px 0 0"></div>
<div class="t" style="left:183.70px;top:106.78px;font-size:9px;line-height:18px;color:#fff;font-weight:normal;-webkit-text-stroke:0.15px #fff;"><span style="display:inline-block;transform-origin:0 0;transform:scaleX(0.93);letter-spacing:0px">Borrador</span></div>
<div class="a" style="left:219.7px;top:110.8px;width:22.3px;height:11px;background:#6e7277;border-radius:5.5px"></div>
<div class="t" style="left:228.95px;top:110.01px;font-size:7.2px;line-height:14px;color:#fff;font-weight:bold;"><span style="display:inline-block;transform-origin:0 0;transform:scaleX(0.95);letter-spacing:0px">4</span></div>
<div class="a" style="left:253.3px;top:102.7px;width:85.39999999999998px;height:25.5px;background:#262e3e;border-radius:3px 3px 0 0"></div>
<div class="t" style="left:262.64px;top:106.78px;font-size:9px;line-height:18px;color:#fff;font-weight:normal;-webkit-text-stroke:0.15px #fff;"><span style="display:inline-block;transform-origin:0 0;transform:scaleX(0.93);letter-spacing:0px">Generados</span></div>
<div class="a" style="left:307.1px;top:110.8px;width:22.3px;height:11px;background:#6e7277;border-radius:5.5px"></div>
<div class="t" style="left:316.30px;top:110.01px;font-size:7.2px;line-height:14px;color:#fff;font-weight:bold;"><span style="display:inline-block;transform-origin:0 0;transform:scaleX(0.95);letter-spacing:0px">2</span></div>
<div class="a" style="left:340px;top:102.7px;width:78px;height:26px;background:#fff;border:1px solid #e6e6e6;border-bottom:none;border-radius:3px 3px 0 0"></div>
<div class="t" style="left:350.00px;top:106.78px;font-size:9px;line-height:18px;color:#555;font-weight:normal;-webkit-text-stroke:0.15px #555;"><span style="display:inline-block;transform-origin:0 0;transform:scaleX(0.93);letter-spacing:0px">Pagados</span></div>
<div class="a" style="left:386.4px;top:110.8px;width:21.6px;height:11px;background:#64686d;border-radius:5.5px"></div>
<div class="t" style="left:391.40px;top:110.01px;font-size:7.2px;line-height:14px;color:#fff;font-weight:bold;"><span style="display:inline-block;transform-origin:0 0;transform:scaleX(0.95);letter-spacing:0px">99+</span></div>
<div class="a" style="left:419.3px;top:102.7px;width:88.89999999999998px;height:25.5px;background:#262e3e;border-radius:3px 3px 0 0"></div>
<div class="t" style="left:429.00px;top:106.78px;font-size:9px;line-height:18px;color:#fff;font-weight:normal;-webkit-text-stroke:0.15px #fff;"><span style="display:inline-block;transform-origin:0 0;transform:scaleX(0.93);letter-spacing:0px">Cancelados</span></div>
<div class="a" style="left:476.2px;top:110.8px;width:22.3px;height:11px;background:#6e7277;border-radius:5.5px"></div>
<div class="t" style="left:483.55px;top:110.01px;font-size:7.2px;line-height:14px;color:#fff;font-weight:bold;"><span style="display:inline-block;transform-origin:0 0;transform:scaleX(0.95);letter-spacing:0px">22</span></div>
<div class="a" style="left:509.2px;top:102.7px;width:129.40000000000003px;height:25.5px;background:#262e3e;border-radius:3px 3px 0 0"></div>
<div class="t" style="left:519.14px;top:106.78px;font-size:9px;line-height:18px;color:#fff;font-weight:normal;-webkit-text-stroke:0.15px #fff;"><span style="display:inline-block;transform-origin:0 0;transform:scaleX(0.93);letter-spacing:0px">Parcialmente Pagados</span></div>
<div class="a" style="left:606.4px;top:110.8px;width:22.3px;height:11px;background:#6e7277;border-radius:5.5px"></div>
<div class="t" style="left:615.61px;top:110.01px;font-size:7.2px;line-height:14px;color:#fff;font-weight:bold;"><span style="display:inline-block;transform-origin:0 0;transform:scaleX(0.95);letter-spacing:0px">8</span></div>
<div class="a" style="left:640px;top:102.7px;width:42.60000000000002px;height:25.5px;background:#262e3e;border-radius:3px 3px 0 0"></div>
<div class="t" style="left:650.13px;top:106.78px;font-size:9px;line-height:18px;color:#fff;font-weight:normal;-webkit-text-stroke:0.15px #fff;"><span style="display:inline-block;transform-origin:0 0;transform:scaleX(0.93);letter-spacing:0px">Todos</span></div>
<div class="a" style="left:174px;top:128.8px;width:820px;height:18.2px;background:#eef6fe;"></div>
<div class="a" style="left:683.5px;top:127.6px;width:310.5px;height:1.2px;background:#e2e4e7;"></div>
<div class="a" style="left:174px;top:128.2px;width:509.5px;height:2px;background:#fff;"></div>
<div class="a" style="left:179.1px;top:137.4px;width:7.8px;height:7.8px;border:1px solid #a9a9a9;border-radius:2px;background:#fff"></div>
<div class="t" style="left:196.20px;top:127.50px;font-size:9.8px;line-height:20px;color:#333;font-weight:normal;-webkit-text-stroke:0.2px #333;"><span style="display:inline-block;transform-origin:0 0;transform:scaleX(0.86759);letter-spacing:0px">Número</span></div>
<div class="t" style="left:374.70px;top:127.50px;font-size:9.8px;line-height:20px;color:#333;font-weight:normal;-webkit-text-stroke:0.2px #333;"><span style="display:inline-block;transform-origin:0 0;transform:scaleX(0.8847700000000001);letter-spacing:0px">Descripción</span></div>
<div class="t" style="left:552.40px;top:127.50px;font-size:9.8px;line-height:20px;color:#333;font-weight:normal;-webkit-text-stroke:0.2px #333;"><span style="display:inline-block;transform-origin:0 0;transform:scaleX(0.8847700000000001);letter-spacing:0px">Fecha de pago</span></div>
<div class="t" style="left:729.70px;top:127.50px;font-size:9.8px;line-height:20px;color:#333;font-weight:normal;-webkit-text-stroke:0.2px #333;"><span style="display:inline-block;transform-origin:0 0;transform:scaleX(0.86759);letter-spacing:0px">Cuenta bancaria</span></div>
<div class="t" style="left:915.40px;top:127.50px;font-size:9.8px;line-height:20px;color:#333;font-weight:normal;-webkit-text-stroke:0.2px #333;"><span style="display:inline-block;transform-origin:0 0;transform:scaleX(0.8890649999999999);letter-spacing:0px">Solicitud de pago</span></div>
<div class="a" style="left:174px;top:147px;width:820px;height:1px;background:#e0e4e7;"></div>
<div class="a" style="left:174px;top:148px;width:820px;height:18px;background:#f9f9f9;"></div>
<div class="a" style="left:179.4px;top:154.20000000000002px;width:7.6px;height:7.8px;border-radius:1.8px;background:#1c74ee"></div><svg style="left:180.9px;top:156.0px" width="5" height="4.4" viewBox="0 0 5 4.4"><path d="M0.5 2.3 L1.9 3.6 L4.5 0.6" fill="none" stroke="#fff" stroke-width="1.3"/></svg>
<div class="a" style="left:196.2px;top:151.2px;width:172.3px;height:12.4px;background:#fafafa;border:1.1px solid #4a88dc;border-radius:2px"></div>
<div class="t" style="left:196.10px;top:147.40px;font-size:9.8px;line-height:20px;color:#333;font-weight:normal;-webkit-text-stroke:0.2px #333;"><span style="display:inline-block;transform-origin:0 0;transform:scaleX(0.859);letter-spacing:0px">3</span></div>
<div class="t" style="left:374.10px;top:147.40px;font-size:9.8px;line-height:20px;color:#333;font-weight:normal;width:175.70px;overflow:hidden;-webkit-text-stroke:0.2px #333;"><span style="display:inline-block;transform-origin:0 0;transform:scaleX(0.84);letter-spacing:0px">PAGO DE ANTICIPOS FERIA TERRAPLEN</span></div>
<div class="t" style="left:551.60px;top:147.40px;font-size:9.8px;line-height:20px;color:#333;font-weight:normal;-webkit-text-stroke:0.2px #333;"><span style="display:inline-block;transform-origin:0 0;transform:scaleX(0.873);letter-spacing:0px">2021-01-07</span></div>
<div class="t" style="left:729.90px;top:147.40px;font-size:9.8px;line-height:20px;color:#3a78b9;font-weight:normal;width:175.00px;overflow:hidden;-webkit-text-stroke:0.2px #3a78b9;"><span style="display:inline-block;transform-origin:0 0;transform:scaleX(0.862);letter-spacing:0px">75210001 - BANCO CENTRAL DEL ECUADOR</span></div>
<div class="t" style="left:939.38px;top:147.40px;font-size:9.8px;line-height:20px;color:#333;font-weight:normal;-webkit-text-stroke:0.2px #333;"><span style="display:inline-block;transform-origin:0 0;transform:scaleX(0.859);letter-spacing:0px">( 10 )</span></div>
<div class="a" style="left:174px;top:166px;width:820px;height:1px;background:#e0e4e7;"></div>
<div class="a" style="left:174px;top:167px;width:820px;height:18px;background:#eef6fe;"></div>
<div class="a" style="left:179.1px;top:173.20000000000002px;width:7.8px;height:7.8px;border:1px solid #a9a9a9;border-radius:2px;background:#fff"></div>
<div class="t" style="left:195.60px;top:166.40px;font-size:9.8px;line-height:20px;color:#333;font-weight:normal;-webkit-text-stroke:0.2px #333;"><span style="display:inline-block;transform-origin:0 0;transform:scaleX(0.859);letter-spacing:0px">4</span></div>
<div class="t" style="left:374.10px;top:166.40px;font-size:9.8px;line-height:20px;color:#333;font-weight:normal;width:175.70px;overflow:hidden;-webkit-text-stroke:0.2px #333;"><span style="display:inline-block;transform-origin:0 0;transform:scaleX(0.84);letter-spacing:0px">PAGO ANTICIPO TERRAPLEN</span></div>
<div class="t" style="left:551.60px;top:166.40px;font-size:9.8px;line-height:20px;color:#333;font-weight:normal;-webkit-text-stroke:0.2px #333;"><span style="display:inline-block;transform-origin:0 0;transform:scaleX(0.873);letter-spacing:0px">2021-01-07</span></div>
<div class="t" style="left:729.90px;top:166.40px;font-size:9.8px;line-height:20px;color:#3a78b9;font-weight:normal;width:175.00px;overflow:hidden;-webkit-text-stroke:0.2px #3a78b9;"><span style="display:inline-block;transform-origin:0 0;transform:scaleX(0.862);letter-spacing:0px">75210001 - BANCO CENTRAL DEL ECUADOR</span></div>
<div class="t" style="left:941.72px;top:166.40px;font-size:9.8px;line-height:20px;color:#333;font-weight:normal;-webkit-text-stroke:0.2px #333;"><span style="display:inline-block;transform-origin:0 0;transform:scaleX(0.859);letter-spacing:0px">( 5 )</span></div>
<div class="a" style="left:174px;top:185px;width:820px;height:1px;background:#e0e4e7;"></div>
<div class="a" style="left:174px;top:186px;width:820px;height:18px;background:#f9f9f9;"></div>
<div class="a" style="left:179.1px;top:192.20000000000002px;width:7.8px;height:7.8px;border:1px solid #a9a9a9;border-radius:2px;background:#fff"></div>
<div class="t" style="left:195.60px;top:185.40px;font-size:9.8px;line-height:20px;color:#333;font-weight:normal;-webkit-text-stroke:0.2px #333;"><span style="display:inline-block;transform-origin:0 0;transform:scaleX(0.859);letter-spacing:0px">5</span></div>
<div class="t" style="left:374.10px;top:185.40px;font-size:9.8px;line-height:20px;color:#333;font-weight:normal;width:175.70px;overflow:hidden;-webkit-text-stroke:0.2px #333;"><span style="display:inline-block;transform-origin:0 0;transform:scaleX(0.84);letter-spacing:0px">PAGO ANTICIPO</span></div>
<div class="t" style="left:551.60px;top:185.40px;font-size:9.8px;line-height:20px;color:#333;font-weight:normal;-webkit-text-stroke:0.2px #333;"><span style="display:inline-block;transform-origin:0 0;transform:scaleX(0.873);letter-spacing:0px">2021-01-11</span></div>
<div class="t" style="left:729.90px;top:185.40px;font-size:9.8px;line-height:20px;color:#3a78b9;font-weight:normal;width:175.00px;overflow:hidden;-webkit-text-stroke:0.2px #3a78b9;"><span style="display:inline-block;transform-origin:0 0;transform:scaleX(0.862);letter-spacing:0px">75210001 - BANCO CENTRAL DEL ECUADOR</span></div>
<div class="t" style="left:941.72px;top:185.40px;font-size:9.8px;line-height:20px;color:#333;font-weight:normal;-webkit-text-stroke:0.2px #333;"><span style="display:inline-block;transform-origin:0 0;transform:scaleX(0.859);letter-spacing:0px">( 2 )</span></div>
<div class="a" style="left:174px;top:204px;width:820px;height:1px;background:#e0e4e7;"></div>
<div class="a" style="left:174px;top:205px;width:820px;height:18px;background:#eef6fe;"></div>
<div class="a" style="left:179.1px;top:211.20000000000002px;width:7.8px;height:7.8px;border:1px solid #a9a9a9;border-radius:2px;background:#fff"></div>
<div class="t" style="left:195.60px;top:204.40px;font-size:9.8px;line-height:20px;color:#333;font-weight:normal;-webkit-text-stroke:0.2px #333;"><span style="display:inline-block;transform-origin:0 0;transform:scaleX(0.859);letter-spacing:0px">6</span></div>
<div class="t" style="left:374.10px;top:204.40px;font-size:9.8px;line-height:20px;color:#333;font-weight:normal;width:175.70px;overflow:hidden;-webkit-text-stroke:0.2px #333;"><span style="display:inline-block;transform-origin:0 0;transform:scaleX(0.84);letter-spacing:0px">ANTICIPO FERIA TERRAPLEN</span></div>
<div class="t" style="left:551.60px;top:204.40px;font-size:9.8px;line-height:20px;color:#333;font-weight:normal;-webkit-text-stroke:0.2px #333;"><span style="display:inline-block;transform-origin:0 0;transform:scaleX(0.873);letter-spacing:0px">2021-01-12</span></div>
<div class="t" style="left:729.90px;top:204.40px;font-size:9.8px;line-height:20px;color:#3a78b9;font-weight:normal;width:175.00px;overflow:hidden;-webkit-text-stroke:0.2px #3a78b9;"><span style="display:inline-block;transform-origin:0 0;transform:scaleX(0.862);letter-spacing:0px">75210001 - BANCO CENTRAL DEL ECUADOR</span></div>
<div class="t" style="left:941.72px;top:204.40px;font-size:9.8px;line-height:20px;color:#333;font-weight:normal;-webkit-text-stroke:0.2px #333;"><span style="display:inline-block;transform-origin:0 0;transform:scaleX(0.859);letter-spacing:0px">( 4 )</span></div>
<div class="a" style="left:174px;top:223px;width:820px;height:1px;background:#e0e4e7;"></div>
<div class="a" style="left:174px;top:224px;width:820px;height:18px;background:#f9f9f9;"></div>
<div class="a" style="left:179.1px;top:230.20000000000002px;width:7.8px;height:7.8px;border:1px solid #a9a9a9;border-radius:2px;background:#fff"></div>
<div class="t" style="left:195.60px;top:223.40px;font-size:9.8px;line-height:20px;color:#333;font-weight:normal;-webkit-text-stroke:0.2px #333;"><span style="display:inline-block;transform-origin:0 0;transform:scaleX(0.859);letter-spacing:0px">7</span></div>
<div class="t" style="left:374.10px;top:223.40px;font-size:9.8px;line-height:20px;color:#333;font-weight:normal;width:175.70px;overflow:hidden;-webkit-text-stroke:0.2px #333;"><span style="display:inline-block;transform-origin:0 0;transform:scaleX(0.84);letter-spacing:0px">PAGO ANTICIPO TERRAPLEN</span></div>
<div class="t" style="left:551.60px;top:223.40px;font-size:9.8px;line-height:20px;color:#333;font-weight:normal;-webkit-text-stroke:0.2px #333;"><span style="display:inline-block;transform-origin:0 0;transform:scaleX(0.873);letter-spacing:0px">2021-01-12</span></div>
<div class="t" style="left:729.90px;top:223.40px;font-size:9.8px;line-height:20px;color:#3a78b9;font-weight:normal;width:175.00px;overflow:hidden;-webkit-text-stroke:0.2px #3a78b9;"><span style="display:inline-block;transform-origin:0 0;transform:scaleX(0.862);letter-spacing:0px">75210001 - BANCO CENTRAL DEL ECUADOR</span></div>
<div class="t" style="left:941.72px;top:223.40px;font-size:9.8px;line-height:20px;color:#333;font-weight:normal;-webkit-text-stroke:0.2px #333;"><span style="display:inline-block;transform-origin:0 0;transform:scaleX(0.859);letter-spacing:0px">( 7 )</span></div>
<div class="a" style="left:174px;top:242px;width:820px;height:1px;background:#e0e4e7;"></div>
<div class="a" style="left:174px;top:243px;width:820px;height:18px;background:#eef6fe;"></div>
<div class="a" style="left:179.1px;top:249.20000000000002px;width:7.8px;height:7.8px;border:1px solid #a9a9a9;border-radius:2px;background:#fff"></div>
<div class="t" style="left:195.60px;top:242.40px;font-size:9.8px;line-height:20px;color:#333;font-weight:normal;-webkit-text-stroke:0.2px #333;"><span style="display:inline-block;transform-origin:0 0;transform:scaleX(0.859);letter-spacing:0px">8</span></div>
<div class="t" style="left:374.10px;top:242.40px;font-size:9.8px;line-height:20px;color:#333;font-weight:normal;width:175.70px;overflow:hidden;-webkit-text-stroke:0.2px #333;"><span style="display:inline-block;transform-origin:0 0;transform:scaleX(0.84);letter-spacing:0px">PAGO ANTICIPO</span></div>
<div class="t" style="left:551.60px;top:242.40px;font-size:9.8px;line-height:20px;color:#333;font-weight:normal;-webkit-text-stroke:0.2px #333;"><span style="display:inline-block;transform-origin:0 0;transform:scaleX(0.873);letter-spacing:0px">2021-01-12</span></div>
<div class="t" style="left:729.90px;top:242.40px;font-size:9.8px;line-height:20px;color:#3a78b9;font-weight:normal;width:175.00px;overflow:hidden;-webkit-text-stroke:0.2px #3a78b9;"><span style="display:inline-block;transform-origin:0 0;transform:scaleX(0.862);letter-spacing:0px">75210001 - BANCO CENTRAL DEL ECUADOR</span></div>
<div class="t" style="left:941.72px;top:242.40px;font-size:9.8px;line-height:20px;color:#333;font-weight:normal;-webkit-text-stroke:0.2px #333;"><span style="display:inline-block;transform-origin:0 0;transform:scaleX(0.859);letter-spacing:0px">( 1 )</span></div>
<div class="a" style="left:174px;top:261px;width:820px;height:1px;background:#e0e4e7;"></div>
<div class="a" style="left:174px;top:262px;width:820px;height:18px;background:#f9f9f9;"></div>
<div class="a" style="left:179.1px;top:268.2px;width:7.8px;height:7.8px;border:1px solid #a9a9a9;border-radius:2px;background:#fff"></div>
<div class="t" style="left:195.60px;top:261.40px;font-size:9.8px;line-height:20px;color:#333;font-weight:normal;-webkit-text-stroke:0.2px #333;"><span style="display:inline-block;transform-origin:0 0;transform:scaleX(0.859);letter-spacing:0px">9</span></div>
<div class="t" style="left:374.10px;top:261.40px;font-size:9.8px;line-height:20px;color:#333;font-weight:normal;width:175.70px;overflow:hidden;-webkit-text-stroke:0.2px #333;"><span style="display:inline-block;transform-origin:0 0;transform:scaleX(0.84);letter-spacing:0px">PAGO DE ANTICIPOS FERIA TERRAPLEN</span></div>
<div class="t" style="left:551.60px;top:261.40px;font-size:9.8px;line-height:20px;color:#333;font-weight:normal;-webkit-text-stroke:0.2px #333;"><span style="display:inline-block;transform-origin:0 0;transform:scaleX(0.873);letter-spacing:0px">2021-01-15</span></div>
<div class="t" style="left:729.90px;top:261.40px;font-size:9.8px;line-height:20px;color:#3a78b9;font-weight:normal;width:175.00px;overflow:hidden;-webkit-text-stroke:0.2px #3a78b9;"><span style="display:inline-block;transform-origin:0 0;transform:scaleX(0.862);letter-spacing:0px">75210001 - BANCO CENTRAL DEL ECUADOR</span></div>
<div class="t" style="left:941.72px;top:261.40px;font-size:9.8px;line-height:20px;color:#333;font-weight:normal;-webkit-text-stroke:0.2px #333;"><span style="display:inline-block;transform-origin:0 0;transform:scaleX(0.859);letter-spacing:0px">( 1 )</span></div>
<div class="a" style="left:174px;top:280px;width:820px;height:1px;background:#e0e4e7;"></div>
<div class="a" style="left:174px;top:281px;width:820px;height:18px;background:#eef6fe;"></div>
<div class="a" style="left:179.1px;top:287.2px;width:7.8px;height:7.8px;border:1px solid #a9a9a9;border-radius:2px;background:#fff"></div>
<div class="t" style="left:195.60px;top:280.40px;font-size:9.8px;line-height:20px;color:#333;font-weight:normal;-webkit-text-stroke:0.2px #333;"><span style="display:inline-block;transform-origin:0 0;transform:scaleX(0.859);letter-spacing:0px">22</span></div>
<div class="t" style="left:374.10px;top:280.40px;font-size:9.8px;line-height:20px;color:#333;font-weight:normal;width:175.70px;overflow:hidden;-webkit-text-stroke:0.2px #333;"><span style="display:inline-block;transform-origin:0 0;transform:scaleX(0.84);letter-spacing:0px">PAGOS MEDIOS DE COMUNICACION</span></div>
<div class="t" style="left:551.60px;top:280.40px;font-size:9.8px;line-height:20px;color:#333;font-weight:normal;-webkit-text-stroke:0.2px #333;"><span style="display:inline-block;transform-origin:0 0;transform:scaleX(0.873);letter-spacing:0px">2021-01-18</span></div>
<div class="t" style="left:729.90px;top:280.40px;font-size:9.8px;line-height:20px;color:#3a78b9;font-weight:normal;width:175.00px;overflow:hidden;-webkit-text-stroke:0.2px #3a78b9;"><span style="display:inline-block;transform-origin:0 0;transform:scaleX(0.862);letter-spacing:0px">75210001 - BANCO CENTRAL DEL ECUADOR</span></div>
<div class="t" style="left:941.72px;top:280.40px;font-size:9.8px;line-height:20px;color:#333;font-weight:normal;-webkit-text-stroke:0.2px #333;"><span style="display:inline-block;transform-origin:0 0;transform:scaleX(0.859);letter-spacing:0px">( 3 )</span></div>
<div class="a" style="left:174px;top:299px;width:820px;height:1px;background:#e0e4e7;"></div>
<div class="a" style="left:174px;top:300px;width:820px;height:18px;background:#f9f9f9;"></div>
<div class="a" style="left:179.1px;top:306.2px;width:7.8px;height:7.8px;border:1px solid #a9a9a9;border-radius:2px;background:#fff"></div>
<div class="t" style="left:195.60px;top:299.40px;font-size:9.8px;line-height:20px;color:#333;font-weight:normal;-webkit-text-stroke:0.2px #333;"><span style="display:inline-block;transform-origin:0 0;transform:scaleX(0.859);letter-spacing:0px">26</span></div>
<div class="t" style="left:374.10px;top:299.40px;font-size:9.8px;line-height:20px;color:#333;font-weight:normal;width:175.70px;overflow:hidden;-webkit-text-stroke:0.2px #333;"><span style="display:inline-block;transform-origin:0 0;transform:scaleX(0.84);letter-spacing:0px">PAGOS ANTICIPOS DE SUELDO</span></div>
<div class="t" style="left:551.60px;top:299.40px;font-size:9.8px;line-height:20px;color:#333;font-weight:normal;-webkit-text-stroke:0.2px #333;"><span style="display:inline-block;transform-origin:0 0;transform:scaleX(0.873);letter-spacing:0px">2021-01-19</span></div>
<div class="t" style="left:729.90px;top:299.40px;font-size:9.8px;line-height:20px;color:#3a78b9;font-weight:normal;width:175.00px;overflow:hidden;-webkit-text-stroke:0.2px #3a78b9;"><span style="display:inline-block;transform-origin:0 0;transform:scaleX(0.862);letter-spacing:0px">75210001 - BANCO CENTRAL DEL ECUADOR</span></div>
<div class="t" style="left:941.72px;top:299.40px;font-size:9.8px;line-height:20px;color:#333;font-weight:normal;-webkit-text-stroke:0.2px #333;"><span style="display:inline-block;transform-origin:0 0;transform:scaleX(0.859);letter-spacing:0px">( 3 )</span></div>
<div class="a" style="left:174px;top:318px;width:820px;height:1px;background:#e0e4e7;"></div>
<div class="a" style="left:174px;top:319px;width:820px;height:18px;background:#eef6fe;"></div>
<div class="a" style="left:179.1px;top:325.2px;width:7.8px;height:7.8px;border:1px solid #a9a9a9;border-radius:2px;background:#fff"></div>
<div class="t" style="left:195.60px;top:318.40px;font-size:9.8px;line-height:20px;color:#333;font-weight:normal;-webkit-text-stroke:0.2px #333;"><span style="display:inline-block;transform-origin:0 0;transform:scaleX(0.859);letter-spacing:0px">27</span></div>
<div class="t" style="left:374.10px;top:318.40px;font-size:9.8px;line-height:20px;color:#333;font-weight:normal;width:175.70px;overflow:hidden;-webkit-text-stroke:0.2px #333;"><span style="display:inline-block;transform-origin:0 0;transform:scaleX(0.84);letter-spacing:0px">PAGO ANTICIPO</span></div>
<div class="t" style="left:551.60px;top:318.40px;font-size:9.8px;line-height:20px;color:#333;font-weight:normal;-webkit-text-stroke:0.2px #333;"><span style="display:inline-block;transform-origin:0 0;transform:scaleX(0.873);letter-spacing:0px">2021-01-19</span></div>
<div class="t" style="left:729.90px;top:318.40px;font-size:9.8px;line-height:20px;color:#3a78b9;font-weight:normal;width:175.00px;overflow:hidden;-webkit-text-stroke:0.2px #3a78b9;"><span style="display:inline-block;transform-origin:0 0;transform:scaleX(0.862);letter-spacing:0px">75210001 - BANCO CENTRAL DEL ECUADOR</span></div>
<div class="t" style="left:941.72px;top:318.40px;font-size:9.8px;line-height:20px;color:#333;font-weight:normal;-webkit-text-stroke:0.2px #333;"><span style="display:inline-block;transform-origin:0 0;transform:scaleX(0.859);letter-spacing:0px">( 1 )</span></div>
<div class="a" style="left:174px;top:337px;width:820px;height:1px;background:#e0e4e7;"></div>
<div class="a" style="left:174px;top:338px;width:820px;height:18px;background:#f9f9f9;"></div>
<div class="a" style="left:179.1px;top:344.2px;width:7.8px;height:7.8px;border:1px solid #a9a9a9;border-radius:2px;background:#fff"></div>
<div class="t" style="left:195.60px;top:337.40px;font-size:9.8px;line-height:20px;color:#333;font-weight:normal;-webkit-text-stroke:0.2px #333;"><span style="display:inline-block;transform-origin:0 0;transform:scaleX(0.859);letter-spacing:0px">28</span></div>
<div class="t" style="left:374.10px;top:337.40px;font-size:9.8px;line-height:20px;color:#333;font-weight:normal;width:175.70px;overflow:hidden;-webkit-text-stroke:0.2px #333;"><span style="display:inline-block;transform-origin:0 0;transform:scaleX(0.84);letter-spacing:0px">PAGOS CUENTAS POR PAGAR AÑOS ANTERIORES</span></div>
<div class="t" style="left:551.60px;top:337.40px;font-size:9.8px;line-height:20px;color:#333;font-weight:normal;-webkit-text-stroke:0.2px #333;"><span style="display:inline-block;transform-origin:0 0;transform:scaleX(0.873);letter-spacing:0px">2021-01-19</span></div>
<div class="t" style="left:729.90px;top:337.40px;font-size:9.8px;line-height:20px;color:#3a78b9;font-weight:normal;width:175.00px;overflow:hidden;-webkit-text-stroke:0.2px #3a78b9;"><span style="display:inline-block;transform-origin:0 0;transform:scaleX(0.862);letter-spacing:0px">75210001 - BANCO CENTRAL DEL ECUADOR</span></div>
<div class="t" style="left:941.72px;top:337.40px;font-size:9.8px;line-height:20px;color:#333;font-weight:normal;-webkit-text-stroke:0.2px #333;"><span style="display:inline-block;transform-origin:0 0;transform:scaleX(0.859);letter-spacing:0px">( 5 )</span></div>
<div class="a" style="left:174px;top:356px;width:820px;height:1px;background:#e0e4e7;"></div>
<div class="a" style="left:174px;top:357px;width:820px;height:18px;background:#eef6fe;"></div>
<div class="a" style="left:179.1px;top:363.2px;width:7.8px;height:7.8px;border:1px solid #a9a9a9;border-radius:2px;background:#fff"></div>
<div class="t" style="left:195.60px;top:356.40px;font-size:9.8px;line-height:20px;color:#333;font-weight:normal;-webkit-text-stroke:0.2px #333;"><span style="display:inline-block;transform-origin:0 0;transform:scaleX(0.859);letter-spacing:0px">29</span></div>
<div class="t" style="left:374.10px;top:356.40px;font-size:9.8px;line-height:20px;color:#333;font-weight:normal;width:175.70px;overflow:hidden;-webkit-text-stroke:0.2px #333;"><span style="display:inline-block;transform-origin:0 0;transform:scaleX(0.84);letter-spacing:0px">PAGOS TRABAJADORES</span></div>
<div class="t" style="left:551.60px;top:356.40px;font-size:9.8px;line-height:20px;color:#333;font-weight:normal;-webkit-text-stroke:0.2px #333;"><span style="display:inline-block;transform-origin:0 0;transform:scaleX(0.873);letter-spacing:0px">2021-01-20</span></div>
<div class="t" style="left:729.90px;top:356.40px;font-size:9.8px;line-height:20px;color:#3a78b9;font-weight:normal;width:175.00px;overflow:hidden;-webkit-text-stroke:0.2px #3a78b9;"><span style="display:inline-block;transform-origin:0 0;transform:scaleX(0.862);letter-spacing:0px">75210001 - BANCO CENTRAL DEL ECUADOR</span></div>
<div class="t" style="left:941.72px;top:356.40px;font-size:9.8px;line-height:20px;color:#333;font-weight:normal;-webkit-text-stroke:0.2px #333;"><span style="display:inline-block;transform-origin:0 0;transform:scaleX(0.859);letter-spacing:0px">( 5 )</span></div>
<div class="a" style="left:174px;top:375px;width:820px;height:1px;background:#e0e4e7;"></div>
<div class="a" style="left:174px;top:376px;width:820px;height:18px;background:#f9f9f9;"></div>
<div class="a" style="left:179.1px;top:382.2px;width:7.8px;height:7.8px;border:1px solid #a9a9a9;border-radius:2px;background:#fff"></div>
<div class="t" style="left:195.60px;top:375.40px;font-size:9.8px;line-height:20px;color:#333;font-weight:normal;-webkit-text-stroke:0.2px #333;"><span style="display:inline-block;transform-origin:0 0;transform:scaleX(0.859);letter-spacing:0px">30</span></div>
<div class="t" style="left:374.10px;top:375.40px;font-size:9.8px;line-height:20px;color:#333;font-weight:normal;width:175.70px;overflow:hidden;-webkit-text-stroke:0.2px #333;"><span style="display:inline-block;transform-origin:0 0;transform:scaleX(0.84);letter-spacing:0px">CUENTAS POR PAGAR AÑOS ANTERIORES</span></div>
<div class="t" style="left:551.60px;top:375.40px;font-size:9.8px;line-height:20px;color:#333;font-weight:normal;-webkit-text-stroke:0.2px #333;"><span style="display:inline-block;transform-origin:0 0;transform:scaleX(0.873);letter-spacing:0px">2021-01-20</span></div>
<div class="t" style="left:729.90px;top:375.40px;font-size:9.8px;line-height:20px;color:#3a78b9;font-weight:normal;width:175.00px;overflow:hidden;-webkit-text-stroke:0.2px #3a78b9;"><span style="display:inline-block;transform-origin:0 0;transform:scaleX(0.862);letter-spacing:0px">75210040 - BANCO CENTRAL DEL ECUADOR</span></div>
<div class="t" style="left:941.72px;top:375.40px;font-size:9.8px;line-height:20px;color:#333;font-weight:normal;-webkit-text-stroke:0.2px #333;"><span style="display:inline-block;transform-origin:0 0;transform:scaleX(0.859);letter-spacing:0px">( 1 )</span></div>
<div class="a" style="left:174px;top:394px;width:820px;height:1px;background:#e0e4e7;"></div>
<div class="a" style="left:174px;top:395px;width:820px;height:18px;background:#eef6fe;"></div>
<div class="a" style="left:179.1px;top:401.2px;width:7.8px;height:7.8px;border:1px solid #a9a9a9;border-radius:2px;background:#fff"></div>
<div class="t" style="left:195.60px;top:394.40px;font-size:9.8px;line-height:20px;color:#333;font-weight:normal;-webkit-text-stroke:0.2px #333;"><span style="display:inline-block;transform-origin:0 0;transform:scaleX(0.859);letter-spacing:0px">31</span></div>
<div class="t" style="left:374.10px;top:394.40px;font-size:9.8px;line-height:20px;color:#333;font-weight:normal;width:175.70px;overflow:hidden;-webkit-text-stroke:0.2px #333;"><span style="display:inline-block;transform-origin:0 0;transform:scaleX(0.84);letter-spacing:0px">PAGOS CUENTAS POR PAGAR AÑOS ANTERIORES</span></div>
<div class="t" style="left:551.60px;top:394.40px;font-size:9.8px;line-height:20px;color:#333;font-weight:normal;-webkit-text-stroke:0.2px #333;"><span style="display:inline-block;transform-origin:0 0;transform:scaleX(0.873);letter-spacing:0px">2021-01-20</span></div>
<div class="t" style="left:729.90px;top:394.40px;font-size:9.8px;line-height:20px;color:#3a78b9;font-weight:normal;width:175.00px;overflow:hidden;-webkit-text-stroke:0.2px #3a78b9;"><span style="display:inline-block;transform-origin:0 0;transform:scaleX(0.862);letter-spacing:0px">75210001 - BANCO CENTRAL DEL ECUADOR</span></div>
<div class="t" style="left:941.72px;top:394.40px;font-size:9.8px;line-height:20px;color:#333;font-weight:normal;-webkit-text-stroke:0.2px #333;"><span style="display:inline-block;transform-origin:0 0;transform:scaleX(0.859);letter-spacing:0px">( 3 )</span></div>
<div class="a" style="left:174px;top:413px;width:820px;height:1px;background:#e0e4e7;"></div>
<div class="a" style="left:174px;top:414px;width:820px;height:18px;background:#f9f9f9;"></div>
<div class="a" style="left:179.1px;top:420.2px;width:7.8px;height:7.8px;border:1px solid #a9a9a9;border-radius:2px;background:#fff"></div>
<div class="t" style="left:195.60px;top:413.40px;font-size:9.8px;line-height:20px;color:#333;font-weight:normal;-webkit-text-stroke:0.2px #333;"><span style="display:inline-block;transform-origin:0 0;transform:scaleX(0.859);letter-spacing:0px">32</span></div>
<div class="t" style="left:374.10px;top:413.40px;font-size:9.8px;line-height:20px;color:#333;font-weight:normal;width:175.70px;overflow:hidden;-webkit-text-stroke:0.2px #333;"><span style="display:inline-block;transform-origin:0 0;transform:scaleX(0.84);letter-spacing:0px">CUENTAS POR PAGAR AÑOS ANTERIORES PERSONAL</span></div>
<div class="t" style="left:551.60px;top:413.40px;font-size:9.8px;line-height:20px;color:#333;font-weight:normal;-webkit-text-stroke:0.2px #333;"><span style="display:inline-block;transform-origin:0 0;transform:scaleX(0.873);letter-spacing:0px">2021-01-20</span></div>
<div class="t" style="left:729.90px;top:413.40px;font-size:9.8px;line-height:20px;color:#3a78b9;font-weight:normal;width:175.00px;overflow:hidden;-webkit-text-stroke:0.2px #3a78b9;"><span style="display:inline-block;transform-origin:0 0;transform:scaleX(0.862);letter-spacing:0px">75210001 - BANCO CENTRAL DEL ECUADOR</span></div>
<div class="t" style="left:941.72px;top:413.40px;font-size:9.8px;line-height:20px;color:#333;font-weight:normal;-webkit-text-stroke:0.2px #333;"><span style="display:inline-block;transform-origin:0 0;transform:scaleX(0.859);letter-spacing:0px">( 7 )</span></div>
<div class="a" style="left:174px;top:432px;width:820px;height:1px;background:#e0e4e7;"></div>
<div class="a" style="left:174px;top:433px;width:820px;height:18px;background:#eef6fe;"></div>
<div class="a" style="left:179.1px;top:439.2px;width:7.8px;height:7.8px;border:1px solid #a9a9a9;border-radius:2px;background:#fff"></div>
<div class="t" style="left:195.60px;top:432.40px;font-size:9.8px;line-height:20px;color:#333;font-weight:normal;-webkit-text-stroke:0.2px #333;"><span style="display:inline-block;transform-origin:0 0;transform:scaleX(0.859);letter-spacing:0px">33</span></div>
<div class="t" style="left:374.10px;top:432.40px;font-size:9.8px;line-height:20px;color:#333;font-weight:normal;width:175.70px;overflow:hidden;-webkit-text-stroke:0.2px #333;"><span style="display:inline-block;transform-origin:0 0;transform:scaleX(0.84);letter-spacing:0px">PAGOS CUENTAS POR PAGAR AÑOS ANTERIORES</span></div>
<div class="t" style="left:551.60px;top:432.40px;font-size:9.8px;line-height:20px;color:#333;font-weight:normal;-webkit-text-stroke:0.2px #333;"><span style="display:inline-block;transform-origin:0 0;transform:scaleX(0.873);letter-spacing:0px">2021-01-20</span></div>
<div class="t" style="left:729.90px;top:432.40px;font-size:9.8px;line-height:20px;color:#3a78b9;font-weight:normal;width:175.00px;overflow:hidden;-webkit-text-stroke:0.2px #3a78b9;"><span style="display:inline-block;transform-origin:0 0;transform:scaleX(0.862);letter-spacing:0px">75210001 - BANCO CENTRAL DEL ECUADOR</span></div>
<div class="t" style="left:941.72px;top:432.40px;font-size:9.8px;line-height:20px;color:#333;font-weight:normal;-webkit-text-stroke:0.2px #333;"><span style="display:inline-block;transform-origin:0 0;transform:scaleX(0.859);letter-spacing:0px">( 7 )</span></div>
<div class="a" style="left:174px;top:451px;width:820px;height:1px;background:#e0e4e7;"></div>
<div class="a" style="left:174px;top:452px;width:820px;height:18px;background:#f9f9f9;"></div>
<div class="a" style="left:179.1px;top:458.2px;width:7.8px;height:7.8px;border:1px solid #a9a9a9;border-radius:2px;background:#fff"></div>
<div class="t" style="left:195.60px;top:451.40px;font-size:9.8px;line-height:20px;color:#333;font-weight:normal;-webkit-text-stroke:0.2px #333;"><span style="display:inline-block;transform-origin:0 0;transform:scaleX(0.859);letter-spacing:0px">34</span></div>
<div class="t" style="left:374.10px;top:451.40px;font-size:9.8px;line-height:20px;color:#333;font-weight:normal;width:175.70px;overflow:hidden;-webkit-text-stroke:0.2px #333;"><span style="display:inline-block;transform-origin:0 0;transform:scaleX(0.84);letter-spacing:0px">PAGOS CUENTAS POR PAGAR AÑOS ANTERIORES</span></div>
<div class="t" style="left:551.60px;top:451.40px;font-size:9.8px;line-height:20px;color:#333;font-weight:normal;-webkit-text-stroke:0.2px #333;"><span style="display:inline-block;transform-origin:0 0;transform:scaleX(0.873);letter-spacing:0px">2021-01-20</span></div>
<div class="t" style="left:729.90px;top:451.40px;font-size:9.8px;line-height:20px;color:#3a78b9;font-weight:normal;width:175.00px;overflow:hidden;-webkit-text-stroke:0.2px #3a78b9;"><span style="display:inline-block;transform-origin:0 0;transform:scaleX(0.862);letter-spacing:0px">75210001 - BANCO CENTRAL DEL ECUADOR</span></div>
<div class="t" style="left:941.72px;top:451.40px;font-size:9.8px;line-height:20px;color:#333;font-weight:normal;-webkit-text-stroke:0.2px #333;"><span style="display:inline-block;transform-origin:0 0;transform:scaleX(0.859);letter-spacing:0px">( 2 )</span></div>
<div class="a" style="left:174px;top:470px;width:820px;height:1px;background:#e0e4e7;"></div>
<div class="a" style="left:174px;top:471px;width:820px;height:18px;background:#eef6fe;"></div>
<div class="a" style="left:179.1px;top:477.2px;width:7.8px;height:7.8px;border:1px solid #a9a9a9;border-radius:2px;background:#fff"></div>
<div class="t" style="left:195.60px;top:470.40px;font-size:9.8px;line-height:20px;color:#333;font-weight:normal;-webkit-text-stroke:0.2px #333;"><span style="display:inline-block;transform-origin:0 0;transform:scaleX(0.859);letter-spacing:0px">35</span></div>
<div class="t" style="left:374.10px;top:470.40px;font-size:9.8px;line-height:20px;color:#333;font-weight:normal;width:175.70px;overflow:hidden;-webkit-text-stroke:0.2px #333;"><span style="display:inline-block;transform-origin:0 0;transform:scaleX(0.84);letter-spacing:0px">CUENTAS POR PAGAR AÑOS ANTERIORES PERSONAL</span></div>
<div class="t" style="left:551.60px;top:470.40px;font-size:9.8px;line-height:20px;color:#333;font-weight:normal;-webkit-text-stroke:0.2px #333;"><span style="display:inline-block;transform-origin:0 0;transform:scaleX(0.873);letter-spacing:0px">2021-01-22</span></div>
<div class="t" style="left:729.90px;top:470.40px;font-size:9.8px;line-height:20px;color:#3a78b9;font-weight:normal;width:175.00px;overflow:hidden;-webkit-text-stroke:0.2px #3a78b9;"><span style="display:inline-block;transform-origin:0 0;transform:scaleX(0.862);letter-spacing:0px">75210001 - BANCO CENTRAL DEL ECUADOR</span></div>
<div class="t" style="left:941.72px;top:470.40px;font-size:9.8px;line-height:20px;color:#333;font-weight:normal;-webkit-text-stroke:0.2px #333;"><span style="display:inline-block;transform-origin:0 0;transform:scaleX(0.859);letter-spacing:0px">( 1 )</span></div>
<div class="a" style="left:174px;top:489px;width:820px;height:1px;background:#e0e4e7;"></div>
<div class="a" style="left:174px;top:490px;width:820px;height:18px;background:#f9f9f9;"></div>
<div class="a" style="left:179.1px;top:496.2px;width:7.8px;height:7.8px;border:1px solid #a9a9a9;border-radius:2px;background:#fff"></div>
<div class="t" style="left:195.60px;top:489.40px;font-size:9.8px;line-height:20px;color:#333;font-weight:normal;-webkit-text-stroke:0.2px #333;"><span style="display:inline-block;transform-origin:0 0;transform:scaleX(0.859);letter-spacing:0px">36</span></div>
<div class="t" style="left:374.10px;top:489.40px;font-size:9.8px;line-height:20px;color:#333;font-weight:normal;width:175.70px;overflow:hidden;-webkit-text-stroke:0.2px #333;"><span style="display:inline-block;transform-origin:0 0;transform:scaleX(0.84);letter-spacing:0px">CUENTAS POR PAGAR AÑOS ANTERIORES PERSONAL</span></div>
<div class="t" style="left:551.60px;top:489.40px;font-size:9.8px;line-height:20px;color:#333;font-weight:normal;-webkit-text-stroke:0.2px #333;"><span style="display:inline-block;transform-origin:0 0;transform:scaleX(0.873);letter-spacing:0px">2021-01-22</span></div>
<div class="t" style="left:729.90px;top:489.40px;font-size:9.8px;line-height:20px;color:#3a78b9;font-weight:normal;width:175.00px;overflow:hidden;-webkit-text-stroke:0.2px #3a78b9;"><span style="display:inline-block;transform-origin:0 0;transform:scaleX(0.862);letter-spacing:0px">75210001 - BANCO CENTRAL DEL ECUADOR</span></div>
<div class="t" style="left:941.72px;top:489.40px;font-size:9.8px;line-height:20px;color:#333;font-weight:normal;-webkit-text-stroke:0.2px #333;"><span style="display:inline-block;transform-origin:0 0;transform:scaleX(0.859);letter-spacing:0px">( 2 )</span></div>
<div class="a" style="left:174px;top:508px;width:820px;height:1px;background:#e0e4e7;"></div>
<div class="a" style="left:174px;top:509px;width:820px;height:18px;background:#eef6fe;"></div>
<div class="a" style="left:179.1px;top:515.1999999999999px;width:7.8px;height:7.8px;border:1px solid #a9a9a9;border-radius:2px;background:#fff"></div>
<div class="t" style="left:195.60px;top:508.40px;font-size:9.8px;line-height:20px;color:#333;font-weight:normal;-webkit-text-stroke:0.2px #333;"><span style="display:inline-block;transform-origin:0 0;transform:scaleX(0.859);letter-spacing:0px">38</span></div>
<div class="t" style="left:374.10px;top:508.40px;font-size:9.8px;line-height:20px;color:#333;font-weight:normal;width:175.70px;overflow:hidden;-webkit-text-stroke:0.2px #333;"><span style="display:inline-block;transform-origin:0 0;transform:scaleX(0.84);letter-spacing:0px">PAGOS CUENTAS POR PAGAR AÑOS ANTERIORES</span></div>
<div class="t" style="left:551.60px;top:508.40px;font-size:9.8px;line-height:20px;color:#333;font-weight:normal;-webkit-text-stroke:0.2px #333;"><span style="display:inline-block;transform-origin:0 0;transform:scaleX(0.873);letter-spacing:0px">2021-01-22</span></div>
<div class="t" style="left:729.90px;top:508.40px;font-size:9.8px;line-height:20px;color:#3a78b9;font-weight:normal;width:175.00px;overflow:hidden;-webkit-text-stroke:0.2px #3a78b9;"><span style="display:inline-block;transform-origin:0 0;transform:scaleX(0.862);letter-spacing:0px">75210001 - BANCO CENTRAL DEL ECUADOR</span></div>
<div class="t" style="left:941.72px;top:508.40px;font-size:9.8px;line-height:20px;color:#333;font-weight:normal;-webkit-text-stroke:0.2px #333;"><span style="display:inline-block;transform-origin:0 0;transform:scaleX(0.859);letter-spacing:0px">( 1 )</span></div>
</body></html>
